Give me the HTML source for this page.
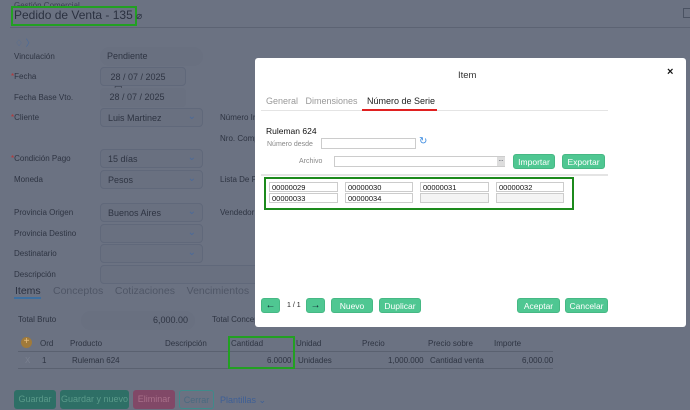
<!DOCTYPE html>
<html><head><meta charset="utf-8"><style>
*{box-sizing:border-box;margin:0;padding:0}
body{width:690px;height:408px;overflow:hidden;background:#6b7282;font-family:"Liberation Sans",sans-serif;position:relative;color:#2b3140}
.a{position:absolute;white-space:nowrap}
.l{font-size:8px;color:#2e3442}
.in{position:absolute;background:#697080;border:1px solid #60687a;border-radius:4px;height:19px;font-size:9px;padding:4px 7px;color:#2e3442}
.chev{position:absolute;right:6px;top:2px;font-size:10px;color:#4a6a9a}
.m{position:absolute;left:255px;top:58px;width:431px;height:269px;background:#fff;border-radius:3px}
.btn{position:absolute;background:#4fc792;color:#fff;font-size:8.5px;border-radius:3px;text-align:center;height:15px;line-height:14px;border:1px solid #46b884}
.sn{position:absolute;height:10px;border:1px solid #ccc;font-size:7.5px;color:#111;padding-left:2px;line-height:9px;background:#fff}
.sn.e{background:#f4f4f4}
.b2{position:absolute;height:19px;line-height:19px;font-size:9px;text-align:center;border-radius:3px;top:390px}
</style></head><body>
<div class="a" style="left:14px;top:1px;font-size:8px;color:#3a4050">Gestión Comercial</div>
<div class="a" style="left:11px;top:6px;width:126px;height:20px;border:2px solid #22a022"></div>
<div class="a" style="left:14px;top:8px;font-size:12px;color:#2b3140">Pedido de Venta - 135 <span style="font-size:10px">⌀</span></div>
<div class="a" style="left:10px;top:27px;width:680px;height:1px;background:#5c6373"></div>
<div class="a" style="left:15px;top:36px;font-size:9px;color:#4a6a9a">♢ 〉</div>
<div class="a l" style="left:14px;top:52px">Vinculación</div>
<div class="in" style="left:100px;top:47px;width:103px;border-radius:10px;border:none">Pendiente</div>
<div class="a l" style="left:11px;top:72px"><span style="color:#b33">*</span>Fecha</div>
<div class="in" style="left:100px;top:67px;width:86px">&nbsp;28 / 07 / 2025 <span style="margin-left:6px">▭</span></div>
<div class="a l" style="left:14px;top:93px">Fecha Base Vto.</div>
<div class="in" style="left:100px;top:88px;width:86px;border:none">&nbsp;28 / 07 / 2025</div>
<div class="a l" style="left:11px;top:113px"><span style="color:#b33">*</span>Cliente</div>
<div class="in" style="left:100px;top:108px;width:103px">Luis Martinez<span class="chev">⌄</span></div>
<div class="a l" style="left:220px;top:113px">Número Int</div>
<div class="a l" style="left:220px;top:134px">Nro. Comp</div>
<div class="a l" style="left:11px;top:154px"><span style="color:#b33">*</span>Condición Pago</div>
<div class="in" style="left:100px;top:149px;width:103px">15 días<span class="chev">⌄</span></div>
<div class="a l" style="left:14px;top:175px">Moneda</div>
<div class="in" style="left:100px;top:170px;width:103px">Pesos<span class="chev">⌄</span></div>
<div class="a l" style="left:220px;top:175px">Lista De Pr</div>
<div class="a l" style="left:14px;top:208px">Provincia Origen</div>
<div class="in" style="left:100px;top:203px;width:103px">Buenos Aires<span class="chev">⌄</span></div>
<div class="a l" style="left:220px;top:208px">Vendedor</div>
<div class="a l" style="left:14px;top:229px">Provincia Destino</div>
<div class="in" style="left:100px;top:224px;width:103px"><span class="chev">⌄</span></div>
<div class="a l" style="left:14px;top:249px">Destinatario</div>
<div class="in" style="left:100px;top:244px;width:103px"><span class="chev">⌄</span></div>
<div class="a l" style="left:14px;top:270px">Descripción</div>
<div class="in" style="left:100px;top:265px;width:160px"></div>
<div class="a" style="left:15px;top:285px;font-size:10.5px;color:#2b3140">Items</div>
<div class="a" style="left:14px;top:297px;width:27px;height:2px;background:#3c6fa0"></div>
<div class="a" style="left:53px;top:285px;font-size:10.5px;color:#4f5666">Conceptos&nbsp;&nbsp;&nbsp;&nbsp;Cotizaciones&nbsp;&nbsp;&nbsp;&nbsp;Vencimientos</div>
<div class="a l" style="left:18px;top:315px">Total Bruto</div>
<div class="in" style="left:81px;top:311px;width:114px;border:none;border-radius:10px;text-align:right">6,000.00</div>
<div class="a l" style="left:212px;top:315px">Total Concep</div>
<div class="a" style="left:21px;top:337px;width:11px;height:11px;border-radius:50%;background:#a07a3a;color:#e8c080;font-size:10px;line-height:10px;text-align:center">+</div>
<div class="a l" style="left:40px;top:339px">Ord</div>
<div class="a l" style="left:70px;top:339px">Producto</div>
<div class="a l" style="left:165px;top:339px">Descripción</div>
<div class="a l" style="left:231px;top:339px">Cantidad</div>
<div class="a l" style="left:296px;top:339px">Unidad</div>
<div class="a l" style="left:362px;top:339px">Precio</div>
<div class="a l" style="left:428px;top:339px">Precio sobre</div>
<div class="a l" style="left:494px;top:339px">Importe</div>
<div class="a" style="left:18px;top:351px;width:535px;height:1px;background:#5a6170"></div>
<div class="a" style="left:18px;top:368px;width:535px;height:1px;background:#5a6170"></div>
<div class="a l" style="left:25px;top:356px;color:#7a8190">X</div>
<div class="a l" style="left:42px;top:356px">1</div>
<div class="a l" style="left:72px;top:356px">Ruleman 624</div>
<div class="a l" style="left:267px;top:356px">6.0000</div>
<div class="a l" style="left:298px;top:356px">Unidades</div>
<div class="a l" style="left:388px;top:356px">1,000.000</div>
<div class="a l" style="left:430px;top:356px">Cantidad venta</div>
<div class="a l" style="left:522px;top:356px">6,000.00</div>
<div class="a" style="left:228px;top:336px;width:67px;height:33px;border:2px solid #22a022"></div>
<div class="b2" style="left:14px;width:42px;background:#2e6f66;color:#5a9a8a">Guardar</div>
<div class="b2" style="left:60px;width:69px;background:#2e6f66;color:#5a9a8a">Guardar y nuevo</div>
<div class="b2" style="left:133px;width:42px;background:#814867;color:#a9708a">Eliminar</div>
<div class="b2" style="left:179px;width:35px;border:1px solid #3f8a8a;color:#4a6a80">Cerrar</div>
<div class="a" style="left:220px;top:395px;font-size:9px;color:#3e5f96">Plantillas ⌄</div>
<div class="a" style="left:683px;top:8px;width:8px;height:10px;border:1px solid #4a5262"></div>

<div class="m">
<div class="a" style="left:203px;top:12px;font-size:9.5px;color:#333">Item</div>
<div class="a" style="left:412px;top:8px;font-size:11px;font-weight:bold;color:#111">×</div>
<div class="a" style="left:11px;top:38px;font-size:9px;color:#999">General&nbsp;&nbsp;&nbsp;Dimensiones</div>
<div class="a" style="left:112px;top:38px;font-size:9px;color:#222">Número de Serie</div>
<div class="a" style="left:6px;top:52px;width:347px;height:1px;background:#e4e4e4"></div>
<div class="a" style="left:107px;top:51px;width:75px;height:2px;background:#e02020"></div>
<div class="a" style="left:11px;top:68px;font-size:8.5px;color:#111">Ruleman 624</div>
<div class="a" style="left:12px;top:83px;font-size:7px;color:#888">Número desde</div>
<div class="a" style="left:66px;top:80px;width:95px;height:11px;border:1px solid #ccc"></div>
<div class="a" style="left:164px;top:78px;font-size:10px;color:#3a8ae0">↻</div>
<div class="a" style="left:44px;top:100px;font-size:7px;color:#888">Archivo</div>
<div class="a" style="left:79px;top:98px;width:171px;height:11px;border:1px solid #ccc"></div>
<div class="a" style="left:242px;top:99px;width:8px;height:9px;background:#ddd;font-size:6px;line-height:6px;text-align:center">...</div>
<div class="btn" style="left:258px;top:96px;width:42px">Importar</div>
<div class="btn" style="left:307px;top:96px;width:43px">Exportar</div>
<div class="a" style="left:6px;top:116px;width:347px;height:2px;background:#e4e4e4"></div>
<div class="a" style="left:9px;top:119px;width:310px;height:33px;border:2px solid #1c8a1c"></div>
<div class="sn" style="left:14px;top:124px;width:69px">00000029</div>
<div class="sn" style="left:90px;top:124px;width:68px">00000030</div>
<div class="sn" style="left:165px;top:124px;width:69px">00000031</div>
<div class="sn" style="left:241px;top:124px;width:68px">00000032</div>
<div class="sn" style="left:14px;top:135px;width:69px">00000033</div>
<div class="sn" style="left:90px;top:135px;width:68px">00000034</div>
<div class="sn e" style="left:165px;top:135px;width:69px"></div>
<div class="sn e" style="left:241px;top:135px;width:68px"></div>
<div class="btn" style="left:6px;top:240px;width:19px;color:#123;font-weight:bold;font-size:10px">←</div>
<div class="a" style="left:32px;top:244px;font-size:7px;color:#222">1 / 1</div>
<div class="btn" style="left:51px;top:240px;width:19px;color:#123;font-weight:bold;font-size:10px">→</div>
<div class="btn" style="left:76px;top:240px;width:42px">Nuevo</div>
<div class="btn" style="left:124px;top:240px;width:42px">Duplicar</div>
<div class="btn" style="left:262px;top:240px;width:43px">Aceptar</div>
<div class="btn" style="left:310px;top:240px;width:43px">Cancelar</div>
</div>
</body></html>
